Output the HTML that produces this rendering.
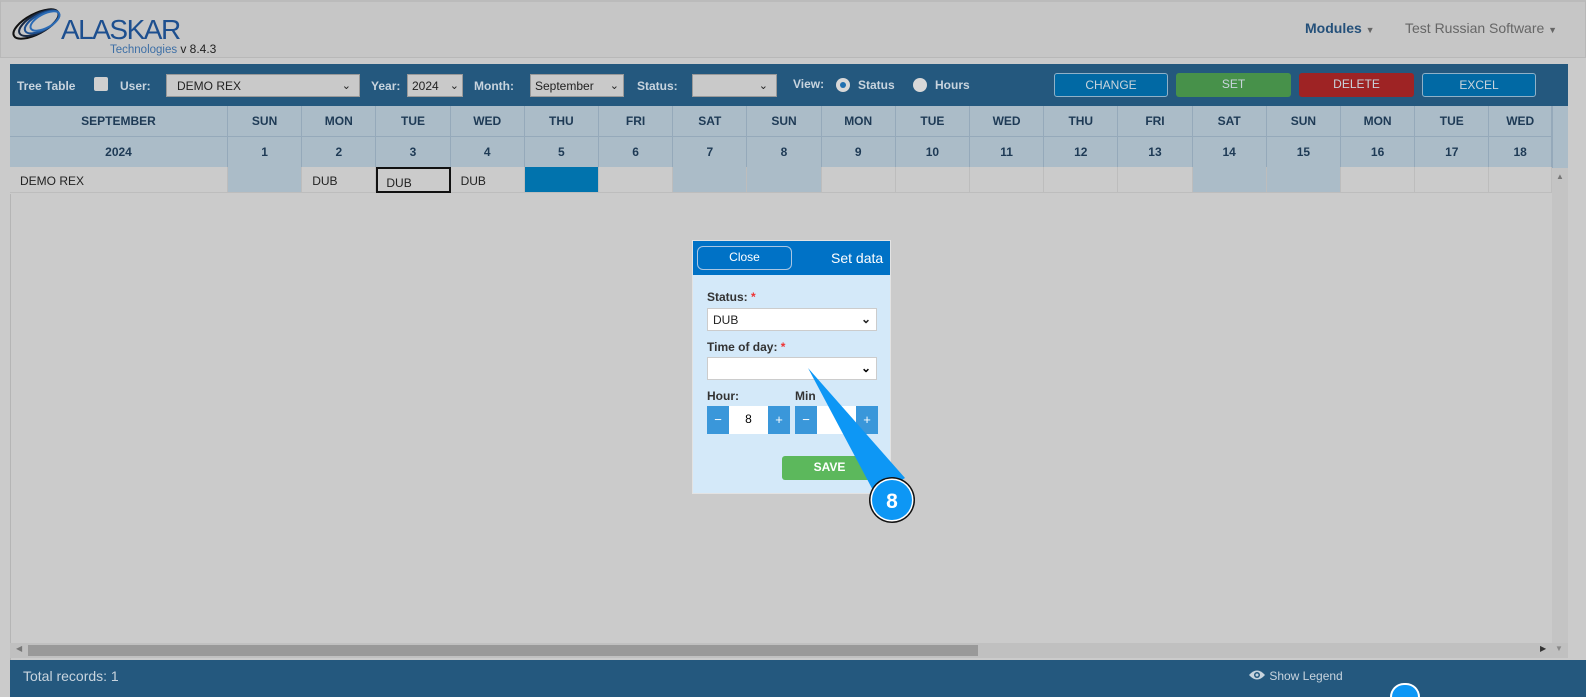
<!DOCTYPE html>
<html><head><meta charset="utf-8"><style>
*{box-sizing:border-box;margin:0;padding:0}
body{width:1586px;height:697px;overflow:hidden;background:#cbcbcb;font-family:"Liberation Sans",Arial,sans-serif;position:relative}
.a{position:absolute}
.hdr{left:0;top:0;width:1586px;height:58px;border:1px solid #b8b8b8;border-top:2px solid #bbb;background:#c6c6c6}
.tb{left:10px;top:64px;width:1558px;height:42px;background:#24587e;color:#c8d4de;font-size:12px;font-weight:bold}
.tb .a{line-height:14px}
.sel{background:#c9c9c9;border:1px solid #999;color:#222;font-weight:normal;font-size:12px;padding:4px 10px}
.chev{position:absolute;right:8px;top:4px;font-size:11px}
.btn{top:9px;height:24px;border-radius:3px;text-align:center;line-height:22px!important;font-weight:normal;font-size:12px;color:#c9d4dc}
.cell{position:absolute;border-right:1px solid #95a9ba;border-bottom:1px solid #95a9ba;text-align:center;font-weight:bold;font-size:12px;color:#1e3a55}
.dc{position:absolute;top:167px;height:26px;border-right:1px solid #bdbdbd;border-bottom:1px solid #bdbdbd;font-size:12px;color:#222}
</style></head><body>
<div class="a hdr"></div>
<svg class="a" style="left:10px;top:5px" width="58" height="36" viewBox="0 0 58 36">
<g fill="none" stroke-width="2">
<ellipse cx="26" cy="19" rx="25" ry="10" transform="rotate(-28 26 19)" stroke="#111"/>
<ellipse cx="29" cy="18" rx="22" ry="9" transform="rotate(-28 29 18)" stroke="#1a2a44"/>
<ellipse cx="32" cy="17" rx="19" ry="8" transform="rotate(-28 32 17)" stroke="#1d4f8f"/>
<ellipse cx="35" cy="16" rx="16" ry="7" transform="rotate(-28 35 16)" stroke="#2b6bb5"/>
</g></svg>
<div class="a" style="left:61px;top:14px;font-size:28px;color:#1d4f8f;letter-spacing:-1.5px">ALASKAR</div>
<div class="a" style="left:110px;top:42px;font-size:11.5px;color:#3d6fa6">Technologies <span style="color:#222;font-size:12px">v 8.4.3</span></div>
<div class="a" style="left:1305px;top:20px;font-size:14px;font-weight:bold;color:#24507a">Modules <span style="font-size:9px;color:#666">▼</span></div>
<div class="a" style="left:1405px;top:20px;font-size:14px;color:#666">Test Russian Software <span style="font-size:9px">▼</span></div>

<div class="a tb">
<div class="a" style="left:7px;top:15px">Tree Table</div>
<div class="a" style="left:84px;top:13px;width:14px;height:14px;background:#cfcfcf;border-radius:2px"></div>
<div class="a" style="left:110px;top:15px">User:</div>
<div class="a sel" style="left:156px;top:10px;width:194px;height:23px">DEMO REX<span class="chev">⌄</span></div>
<div class="a" style="left:361px;top:15px">Year:</div>
<div class="a sel" style="left:397px;top:10px;width:56px;height:23px;padding:4px 4px">2024<span class="chev" style="right:3px">⌄</span></div>
<div class="a" style="left:464px;top:15px">Month:</div>
<div class="a sel" style="left:520px;top:10px;width:94px;height:23px;padding:4px 4px">September<span class="chev" style="right:4px">⌄</span></div>
<div class="a" style="left:627px;top:15px">Status:</div>
<div class="a sel" style="left:682px;top:10px;width:85px;height:23px"><span class="chev">⌄</span></div>
<div class="a" style="left:783px;top:13px">View:</div>
<div class="a" style="left:826px;top:14px;width:14px;height:14px;border-radius:50%;background:#d8d8d8"><div style="margin:4px;width:6px;height:6px;border-radius:50%;background:#1f6fb0"></div></div>
<div class="a" style="left:848px;top:14px">Status</div>
<div class="a" style="left:903px;top:14px;width:14px;height:14px;border-radius:50%;background:#d8d8d8"></div>
<div class="a" style="left:925px;top:14px">Hours</div>
<div class="a btn" style="left:1044px;width:114px;background:#0169a4;border:1px solid #8fb1c8">CHANGE</div>
<div class="a btn" style="left:1166px;width:115px;background:#47914a">SET</div>
<div class="a btn" style="left:1289px;width:115px;background:#9e2324">DELETE</div>
<div class="a btn" style="left:1412px;width:114px;background:#0169a4;border:1px solid #8fb1c8">EXCEL</div>
</div>

<div class="a" style="left:10px;top:106px;width:1558px;height:62px;background:#abbcc8"></div>
<div class="a" style="left:1552px;top:106px;width:16px;height:62px;background:#abbcc8;border-left:1px solid #95a9ba"></div>
<div class="cell" style="left:10px;top:106px;width:218px;height:31px;line-height:30px">SEPTEMBER</div>
<div class="cell" style="left:10px;top:137px;width:218px;height:31px;line-height:30px">2024</div>
<div id="cols"></div>
<div class="a" style="left:10px;top:167px;width:1542px;height:27px;background:#cbcbcb"></div>
<div class="dc" style="left:10px;width:218px;padding:7px 10px">DEMO REX</div>
<div id="row"></div>
<div class="a" style="left:10px;top:194px;width:1px;height:466px;background:#b5b5b5"></div>
<div class="a" style="left:1552px;top:168px;width:16px;height:475px;background:#c4c4c4"></div>
<div class="a" style="left:1556px;top:172px;font-size:8px;color:#777">▲</div>
<div class="a" style="left:10px;top:643px;width:1558px;height:15px;background:#c0c0c0"></div>
<div class="a" style="left:28px;top:645px;width:950px;height:11px;background:#999"></div>
<div class="a" style="left:16px;top:644px;font-size:8px;color:#777">◀</div>
<div class="a" style="left:1540px;top:644px;font-size:8px;color:#333">▶</div>
<div class="a" style="left:1555px;top:644px;font-size:8px;color:#888">▼</div>
<div class="a" style="left:10px;top:660px;width:1576px;height:37px;background:#24587e"></div>
<div class="a" style="left:23px;top:668px;font-size:14px;color:#c8d4de">Total records: 1</div>
<div class="a" style="left:1248px;top:669px;font-size:12px;color:#c8d4de">
<svg width="18" height="12" viewBox="0 0 18 12" style="vertical-align:-1px"><path d="M1 6Q9 -3 17 6Q9 15 1 6Z" fill="#c8d4de"/><circle cx="9" cy="6" r="3" fill="#24587e"/><circle cx="9" cy="6" r="1.5" fill="#c8d4de"/></svg> Show Legend</div>

<div class="a" style="left:692px;top:240px;width:199px;height:254px;background:#d4e9f9;border:1px solid #e3e3e3"></div>
<div class="a" style="left:693px;top:241px;width:197px;height:34px;background:#0072c6"></div>
<div class="a" style="left:697px;top:246px;width:95px;height:24px;border:1px solid #a9c6e3;border-radius:6px;color:#fff;font-size:12px;text-align:center;line-height:21px">Close</div>
<div class="a" style="left:831px;top:250px;color:#fff;font-size:14px">Set data</div>
<div class="a" style="left:707px;top:290px;font-size:12px;font-weight:bold;color:#333">Status: <span style="color:#e33">*</span></div>
<div class="a" style="left:707px;top:308px;width:170px;height:23px;background:#fff;border:1px solid #ccc;font-size:12px;padding:4px 5px;color:#222">DUB<span style="position:absolute;right:5px;top:3px;font-weight:bold">⌄</span></div>
<div class="a" style="left:707px;top:340px;font-size:12px;font-weight:bold;color:#333">Time of day: <span style="color:#e33">*</span></div>
<div class="a" style="left:707px;top:357px;width:170px;height:23px;background:#fff;border:1px solid #ccc"><span style="position:absolute;right:5px;top:3px;font-weight:bold;font-size:12px">⌄</span></div>
<div class="a" style="left:707px;top:389px;font-size:12px;font-weight:bold;color:#333">Hour:</div>
<div class="a" style="left:795px;top:389px;font-size:12px;font-weight:bold;color:#333">Min</div>
<div class="a" style="left:707px;top:406px;width:22px;height:28px;background:#3a97da;color:#fff;text-align:center;line-height:27px;font-size:13px">−</div>
<div class="a" style="left:729px;top:406px;width:39px;height:28px;background:#fff;text-align:center;line-height:27px;font-size:12px">8</div>
<div class="a" style="left:768px;top:406px;width:22px;height:28px;background:#3a97da;color:#fff;text-align:center;line-height:27px;font-size:13px">+</div>
<div class="a" style="left:795px;top:406px;width:22px;height:28px;background:#3a97da;color:#fff;text-align:center;line-height:27px;font-size:13px">−</div>
<div class="a" style="left:817px;top:406px;width:39px;height:28px;background:#fff"></div>
<div class="a" style="left:856px;top:406px;width:22px;height:28px;background:#3a97da;color:#fff;text-align:center;line-height:27px;font-size:13px">+</div>
<div class="a" style="left:782px;top:456px;width:95px;height:24px;background:#5cb85c;border-radius:3px;color:#fff;font-size:12px;font-weight:bold;text-align:center;line-height:23px">SAVE</div>

<svg class="a" style="left:0;top:0" width="1586" height="697">
<polygon points="808,368 905,478 876,496" fill="#0d97f5"/>
<circle cx="892" cy="500" r="23" fill="#111"/>
<circle cx="892" cy="500" r="21.5" fill="#fff"/>
<circle cx="892" cy="500" r="20" fill="#0d97f5"/>
<text x="892" y="508" text-anchor="middle" font-family="Liberation Sans,Arial,sans-serif" font-weight="bold" font-size="21" fill="#fff">8</text>
</svg>
<div class="a" style="left:1390px;top:683px;width:30px;height:14px;border-radius:15px 15px 0 0;border:2px solid #fff;border-bottom:none;background:#0d97f5"></div>

<script>
var days=["SUN","MON","TUE","WED","THU","FRI","SAT","SUN","MON","TUE","WED","THU","FRI","SAT","SUN","MON","TUE","WED"];
var h="",r="";
for(var i=0;i<18;i++){var x=228+i*74.2,w=74.2;if(x+w>1552)w=1552-x;
h+='<div class="cell" style="left:'+x+'px;top:106px;width:'+w+'px;height:31px;line-height:30px">'+days[i]+'</div>';
h+='<div class="cell" style="left:'+x+'px;top:137px;width:'+w+'px;height:31px;line-height:30px">'+(i+1)+'</div>';
var bg="#cbcbcb",t="",ex="";
if(i==0||i==6||i==7||i==13||i==14)bg="#abbcc8";
if(i==4)bg="#0173ad";
if(i==1||i==3)t="DUB";
if(i==2){t="DUB";ex="outline:2px solid #111;outline-offset:-2px;padding-top:9px!important;";}
r+='<div class="dc" style="left:'+x+'px;width:'+w+'px;background:'+bg+';padding:7px 10px;'+ex+'">'+t+'</div>';}
document.getElementById("cols").outerHTML=h;document.getElementById("row").outerHTML=r;
</script>
</body></html>
